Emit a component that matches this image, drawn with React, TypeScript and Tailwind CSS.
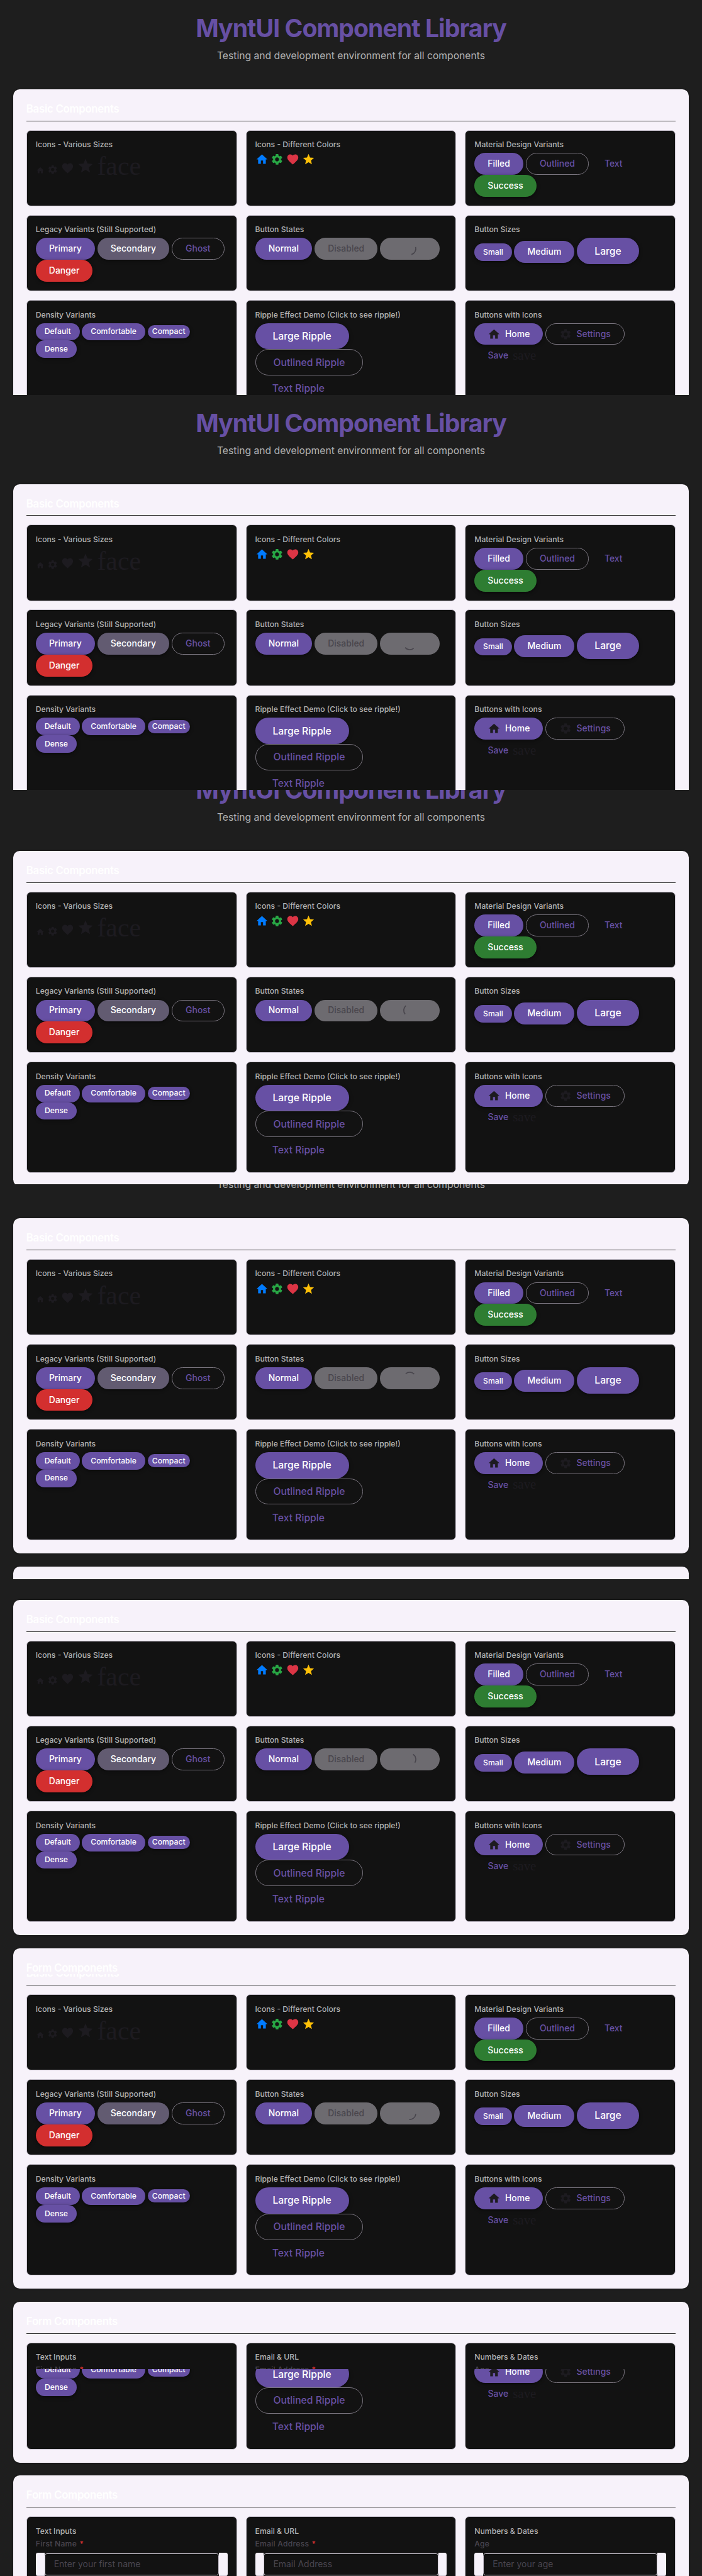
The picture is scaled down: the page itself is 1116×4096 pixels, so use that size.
import React from 'react';
import { MdHome, MdSettings, MdFavorite, MdStar } from 'react-icons/md';

const BASE = 'inline-flex shrink-0 items-center justify-center whitespace-nowrap font-medium';
const SHADOW = 'shadow-[0_1px_2px_rgba(0,0,0,0.3),0_2px_6px_2px_rgba(0,0,0,0.22)]';
const SIZES = {
  xs: 'h-6 rounded-[12px] px-2 text-[14px]',
  sm: 'h-8 rounded-[16px] px-4 text-[14px]',
  md: 'h-10 rounded-[20px] px-6 text-[16px]',
  lg: 'h-12 rounded-[24px] px-8 text-[18px]',
};
const KINDS = {
  filled: 'bg-[#6750a4] text-white ' + SHADOW,
  secondary: 'bg-[#625b71] text-white ' + SHADOW,
  success: 'bg-[#2e7d32] text-white ' + SHADOW,
  danger: 'bg-[#d32f2f] text-white ' + SHADOW,
  outlined: 'border border-[#79747e] text-[#6750a4]',
  text: 'text-[#6750a4]',
  disabled: 'bg-[#6d6b70] text-[#49464d]',
};

type BtnProps = {
  size?: keyof typeof SIZES;
  kind?: keyof typeof KINDS;
  w: number;
  children?: React.ReactNode;
};

function Btn({ size = 'md', kind = 'filled', w, children }: BtnProps) {
  return (
    <button className={`${BASE} ${SIZES[size]} ${KINDS[kind]}`} style={{ width: w }}>
      {children}
    </button>
  );
}

function Card({ title, tall, children }: { title: string; tall?: boolean; children: React.ReactNode }) {
  return (
    <div
      className={`rounded-lg border border-[#cac4d0] bg-[#121212] p-4 ${tall ? 'h-[203px]' : 'h-[139px]'}`}
    >
      <h3 className="h-[25px] whitespace-nowrap pt-[2px] text-[14px] font-medium leading-[17px] text-[#b3b3b3]">
        {title}
      </h3>
      {children}
    </div>
  );
}

function Row({ children, className = 'items-baseline' }: { children: React.ReactNode; className?: string }) {
  return <div className={`flex gap-[4.5px] ${className}`}>{children}</div>;
}

function Section({ title, children }: { title: string; children: React.ReactNode }) {
  return (
    <section className="mb-6 rounded-xl bg-[#f7f2fa] p-6 shadow-[0_1px_3px_rgba(0,0,0,0.3)]">
      <h2 className="mb-4 h-[34px] border-b border-[#333] text-[19.2px] font-semibold leading-[24px] tracking-[-0.3px] text-white">
        {title}
      </h2>
      <div className="grid grid-cols-3 gap-4">{children}</div>
    </section>
  );
}

function Field({ label, required, placeholder }: { label: string; required?: boolean; placeholder: string }) {
  return (
    <div>
      <div className="flex h-[25px] gap-[5px] text-[14px] font-medium leading-[17px] tracking-[0.25px] text-[#49454f]">
        {label}
        {required && <span className="text-[#d32f2f]">*</span>}
      </div>
      <div className="h-[42px] rounded bg-[#f7f2fa] px-4 shadow-[inset_0_-1px_0_#cac4d0]">
        <div className="h-full bg-[#121212] py-px">
          <div className="flex h-10 items-center rounded border border-[#cac4d0] px-4 text-[16px] text-[#49454f]">
            {placeholder}
          </div>
        </div>
      </div>
    </div>
  );
}

function Gallery({ spin }: { spin: number }) {
  return (
    <div className="w-[1280px] px-6">
      <header className="h-[163px] pt-6 text-center">
        <h1 className="text-[45px] font-bold leading-[54px] tracking-[-1.15px] text-[#6750a4]">
          MyntUI Component Library
        </h1>
        <p className="mt-[14px] text-[18px] leading-[21px] text-[#b3b3b3]">
          Testing and development environment for all components
        </p>
      </header>
      <Section title="Basic Components">
        <Card title="Icons - Various Sizes">
          <div className="flex h-10 items-end gap-[5px] text-[#1d1b20]">
            <MdHome size={16} />
            <MdSettings size={20} />
            <MdFavorite size={24} />
            <MdStar size={32} />
            <span className="mb-[5px] font-[family-name:Liberation_Serif,serif] text-[48px] leading-[20px]">face</span>
          </div>
        </Card>
        <Card title="Icons - Different Colors">
          <Row>
            <MdHome size={24} color="#007bff" />
            <MdSettings size={24} color="#28a745" />
            <MdFavorite size={24} color="#dc3545" />
            <MdStar size={24} color="#ffc107" />
          </Row>
        </Card>
        <Card title="Material Design Variants">
          <Row>
            <Btn w={89}>Filled</Btn>
            <Btn w={115} kind="outlined">Outlined</Btn>
            <Btn w={81} kind="text">Text</Btn>
          </Row>
          <Row>
            <Btn w={113} kind="success">Success</Btn>
          </Row>
        </Card>
        <Card title="Legacy Variants (Still Supported)">
          <Row>
            <Btn w={108}>Primary</Btn>
            <Btn w={131} kind="secondary">Secondary</Btn>
            <Btn w={96} kind="outlined">Ghost</Btn>
          </Row>
          <Row>
            <Btn w={104} kind="danger">Danger</Btn>
          </Row>
        </Card>
        <Card title="Button States">
          <Row className="items-center">
            <Btn w={104}>Normal</Btn>
            <Btn w={115} kind="disabled">Disabled</Btn>
            <Btn w={109} kind="disabled">
              <svg width="24" height="24" viewBox="0 0 24 24" style={{ transform: `rotate(${spin}deg)` }}>
                <path d="M4.2 4.2A11 11 0 0 1 19.8 4.2" fill="none" stroke="#49464d" strokeWidth="2" />
              </svg>
            </Btn>
          </Row>
        </Card>
        <Card title="Button Sizes">
          <Row>
            <Btn w={68} size="sm">Small</Btn>
            <Btn w={110}>Medium</Btn>
            <Btn w={113} size="lg">Large</Btn>
          </Row>
        </Card>
        <Card title="Density Variants" tall>
          <Row>
            <Btn w={80} size="sm">Default</Btn>
            <Btn w={115} size="sm">Comfortable</Btn>
            <Btn w={77} size="xs">Compact</Btn>
          </Row>
          <Row>
            <Btn w={75} size="sm">Dense</Btn>
          </Row>
        </Card>
        <Card title="Ripple Effect Demo (Click to see ripple!)" tall>
          <div className="flex flex-col items-start">
            <Btn w={171} size="lg">Large Ripple</Btn>
            <Btn w={197} size="lg" kind="outlined">Outlined Ripple</Btn>
            <Btn w={158} size="lg" kind="text">Text Ripple</Btn>
          </div>
        </Card>
        <Card title="Buttons with Icons" tall>
          <Row className="items-center">
            <Btn w={125}>
              <MdHome size={24} color="#1d1b20" className="mr-2" />
              Home
            </Btn>
            <Btn w={144} kind="outlined">
              <MdSettings size={24} color="#1d1b20" className="mr-2" />
              Settings
            </Btn>
          </Row>
          <Row>
            <Btn w={137} kind="text">
              Save
              <span className="ml-2 font-[family-name:Liberation_Serif,serif] text-[24px] font-normal text-[#1d1b20]">
                save
              </span>
            </Btn>
          </Row>
        </Card>
      </Section>
      <Section title="Form Components">
        <Card title="Text Inputs" tall>
          <Field label="First Name" required placeholder="Enter your first name" />
        </Card>
        <Card title="Email & URL" tall>
          <Field label="Email Address" required placeholder="Email Address" />
        </Card>
        <Card title="Numbers & Dates" tall>
          <Field label="Age" placeholder="Enter your age" />
        </Card>
      </Section>
    </div>
  );
}

const FRAMES = [
  { height: 720, scroll: 0, spin: 119 },
  { height: 720, scroll: 0, spin: 185 },
  { height: 720, scroll: 51, spin: 275 },
  { height: 720, scroll: 101, spin: 2 },
  { height: 720, scroll: 125, spin: 78 },
  { height: 720, scroll: 200, spin: 140 },
  { height: 378, scroll: 603, spin: 0 },
];

export default function App() {
  return (
    <main className="h-[4698px] w-[1280px] overflow-hidden bg-[#1e1e1e] font-[Inter,sans-serif] [zoom:0.871875]">
      {FRAMES.map((f, i) => (
        <div key={i} className="overflow-hidden" style={{ height: f.height }}>
          <div className="flow-root" style={{ marginTop: -f.scroll }}>
            <Gallery spin={f.spin} />
          </div>
        </div>
      ))}
    </main>
  );
}
